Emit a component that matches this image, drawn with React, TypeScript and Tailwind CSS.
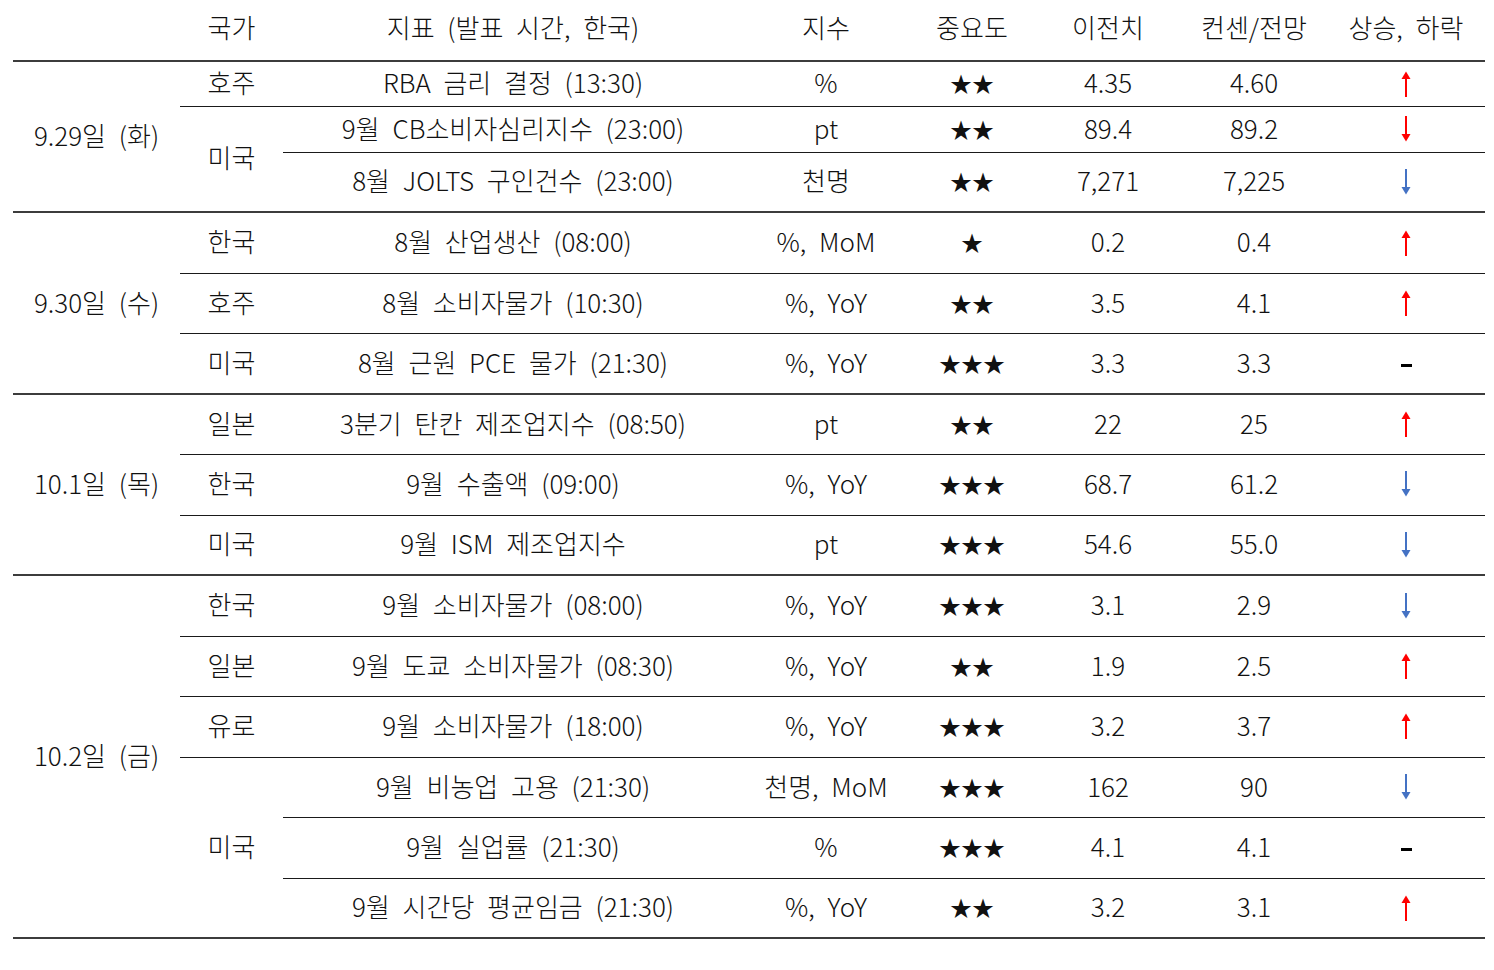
import React from 'react'

type Dir = 'up' | 'down' | 'downBlue' | 'flat'

type Row = {
  country?: string
  countrySpan?: number
  name: string
  unit: string
  stars: number
  prev: string
  cons: string
  dir: Dir
  h: number
}

type Group = { date: string; rows: Row[] }

const groups: Group[] = [
  {
    date: '9.29일 (화)',
    rows: [
      { country: '호주', name: 'RBA 금리 결정 (13:30)', unit: '%', stars: 2, prev: '4.35', cons: '4.60', dir: 'up', h: 45 },
      { country: '미국', countrySpan: 2, name: '9월 CB소비자심리지수 (23:00)', unit: 'pt', stars: 2, prev: '89.4', cons: '89.2', dir: 'down', h: 46 },
      { name: '8월 JOLTS 구인건수 (23:00)', unit: '천명', stars: 2, prev: '7,271', cons: '7,225', dir: 'downBlue', h: 60 },
    ],
  },
  {
    date: '9.30일 (수)',
    rows: [
      { country: '한국', name: '8월 산업생산 (08:00)', unit: '%, MoM', stars: 1, prev: '0.2', cons: '0.4', dir: 'up', h: 61 },
      { country: '호주', name: '8월 소비자물가 (10:30)', unit: '%, YoY', stars: 2, prev: '3.5', cons: '4.1', dir: 'up', h: 60 },
      { country: '미국', name: '8월 근원 PCE 물가 (21:30)', unit: '%, YoY', stars: 3, prev: '3.3', cons: '3.3', dir: 'flat', h: 61 },
    ],
  },
  {
    date: '10.1일 (목)',
    rows: [
      { country: '일본', name: '3분기 탄칸 제조업지수 (08:50)', unit: 'pt', stars: 2, prev: '22', cons: '25', dir: 'up', h: 60 },
      { country: '한국', name: '9월 수출액 (09:00)', unit: '%, YoY', stars: 3, prev: '68.7', cons: '61.2', dir: 'downBlue', h: 61 },
      { country: '미국', name: '9월 ISM 제조업지수', unit: 'pt', stars: 3, prev: '54.6', cons: '55.0', dir: 'downBlue', h: 60 },
    ],
  },
  {
    date: '10.2일 (금)',
    rows: [
      { country: '한국', name: '9월 소비자물가 (08:00)', unit: '%, YoY', stars: 3, prev: '3.1', cons: '2.9', dir: 'downBlue', h: 61 },
      { country: '일본', name: '9월 도쿄 소비자물가 (08:30)', unit: '%, YoY', stars: 2, prev: '1.9', cons: '2.5', dir: 'up', h: 60 },
      { country: '유로', name: '9월 소비자물가 (18:00)', unit: '%, YoY', stars: 3, prev: '3.2', cons: '3.7', dir: 'up', h: 61 },
      { country: '미국', countrySpan: 3, name: '9월 비농업 고용 (21:30)', unit: '천명, MoM', stars: 3, prev: '162', cons: '90', dir: 'downBlue', h: 60 },
      { name: '9월 실업률 (21:30)', unit: '%', stars: 3, prev: '4.1', cons: '4.1', dir: 'flat', h: 61 },
      { name: '9월 시간당 평균임금 (21:30)', unit: '%, YoY', stars: 2, prev: '3.2', cons: '3.1', dir: 'up', h: 60 },
    ],
  },
]

function Arrow({ dir }: { dir: Dir }) {
  if (dir === 'flat') {
    return <span className="inline-block h-[3px] w-[11px] bg-black align-middle" />
  }
  const color = dir === 'downBlue' ? '#4472c4' : '#ff0000'
  const up = dir === 'up'
  return (
    <svg width="12" height="28" viewBox="0 0 12 28" className="inline-block align-middle">
      {up ? (
        <>
          <line x1="6" y1="4" x2="6" y2="27" stroke={color} strokeWidth="2" />
          <path d="M1.5 9 L6 1.5 L10.5 9 Z" fill={color} />
        </>
      ) : (
        <>
          <line x1="6" y1="1" x2="6" y2="24" stroke={color} strokeWidth="2" />
          <path d="M1.5 19 L6 26.5 L10.5 19 Z" fill={color} />
        </>
      )}
    </svg>
  )
}

const cell = 'p-0 pb-[3px] text-center align-middle whitespace-nowrap'
const groupLine = 'border-t-2 border-[#3c3c3c]'
const innerLine = 'border-t-[1.5px] border-[#1a1a1a]'

export default function App() {
  return (
    <div
      className="min-h-screen bg-white pl-[13px] text-[26px] leading-none text-[#111] font-light [word-spacing:7px]"
      style={{ fontFamily: '"Noto Sans CJK KR", "Noto Sans", sans-serif' }}
    >
      <table className="w-[1472px] table-fixed border-collapse">
        <colgroup>
          <col className="w-[167px]" />
          <col className="w-[103px]" />
          <col className="w-[460px]" />
          <col className="w-[166px]" />
          <col className="w-[126px]" />
          <col className="w-[146px]" />
          <col className="w-[146px]" />
          <col className="w-[158px]" />
        </colgroup>
        <thead>
          <tr className="h-[61px]">
            <th className={`${cell} font-light pb-[6px]`}></th>
            <th className={`${cell} font-light pb-[6px]`}>국가</th>
            <th className={`${cell} font-light pb-[6px]`}>지표 (발표 시간, 한국)</th>
            <th className={`${cell} font-light pb-[6px]`}>지수</th>
            <th className={`${cell} font-light pb-[6px]`}>중요도</th>
            <th className={`${cell} font-light pb-[6px]`}>이전치</th>
            <th className={`${cell} font-light pb-[6px]`}>컨센/전망</th>
            <th className={`${cell} font-light pb-[6px]`}>상승, 하락</th>
          </tr>
        </thead>
        <tbody>
          {groups.map((g, gi) =>
            g.rows.map((r, ri) => {
              const top = ri === 0 ? groupLine : innerLine
              return (
                <tr key={`${gi}-${ri}`} style={{ height: r.h }}>
                  {ri === 0 && (
                    <td rowSpan={g.rows.length} className={`${cell} ${groupLine}`}>
                      {g.date}
                    </td>
                  )}
                  {r.country && (
                    <td rowSpan={r.countrySpan ?? 1} className={`${cell} ${top}`}>
                      {r.country}
                    </td>
                  )}
                  <td className={`${cell} ${top}`}>{r.name}</td>
                  <td className={`${cell} ${top}`}>{r.unit}</td>
                  <td className={`${cell} ${top} text-[22px]`}>{'★'.repeat(r.stars)}</td>
                  <td className={`${cell} ${top}`}>{r.prev}</td>
                  <td className={`${cell} ${top}`}>{r.cons}</td>
                  <td className={`${cell} ${top}`}>
                    <Arrow dir={r.dir} />
                  </td>
                </tr>
              )
            })
          )}
          <tr>
            <td colSpan={8} className={groupLine}></td>
          </tr>
        </tbody>
      </table>
    </div>
  )
}
